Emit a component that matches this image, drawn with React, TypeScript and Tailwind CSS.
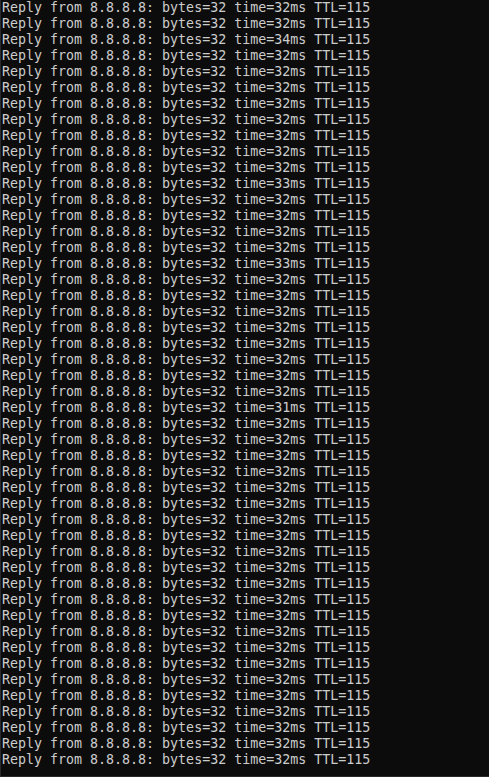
import React from "react";

const times: Record<number, number> = { 3: 34, 12: 33, 17: 33, 26: 31 };

export default function App() {
  const lines = Array.from({ length: 48 }, (_, i) => i + 1);
  return (
    <div
      className="w-[489px] h-[777px] overflow-hidden bg-[#0c0c0c] text-[#cccccc] border-l border-b border-[#2a2a2a] pl-[1px] pt-0"
      style={{ fontFamily: '"DejaVu Sans Mono", "Liberation Mono", monospace' }}
    >
      <div className="flex flex-col text-[13.3px] leading-[16px] whitespace-pre">
        {lines.map((n) => (
          <div key={n}>{`Reply from 8.8.8.8: bytes=32 time=${times[n] ?? 32}ms TTL=115`}</div>
        ))}
      </div>
    </div>
  );
}
